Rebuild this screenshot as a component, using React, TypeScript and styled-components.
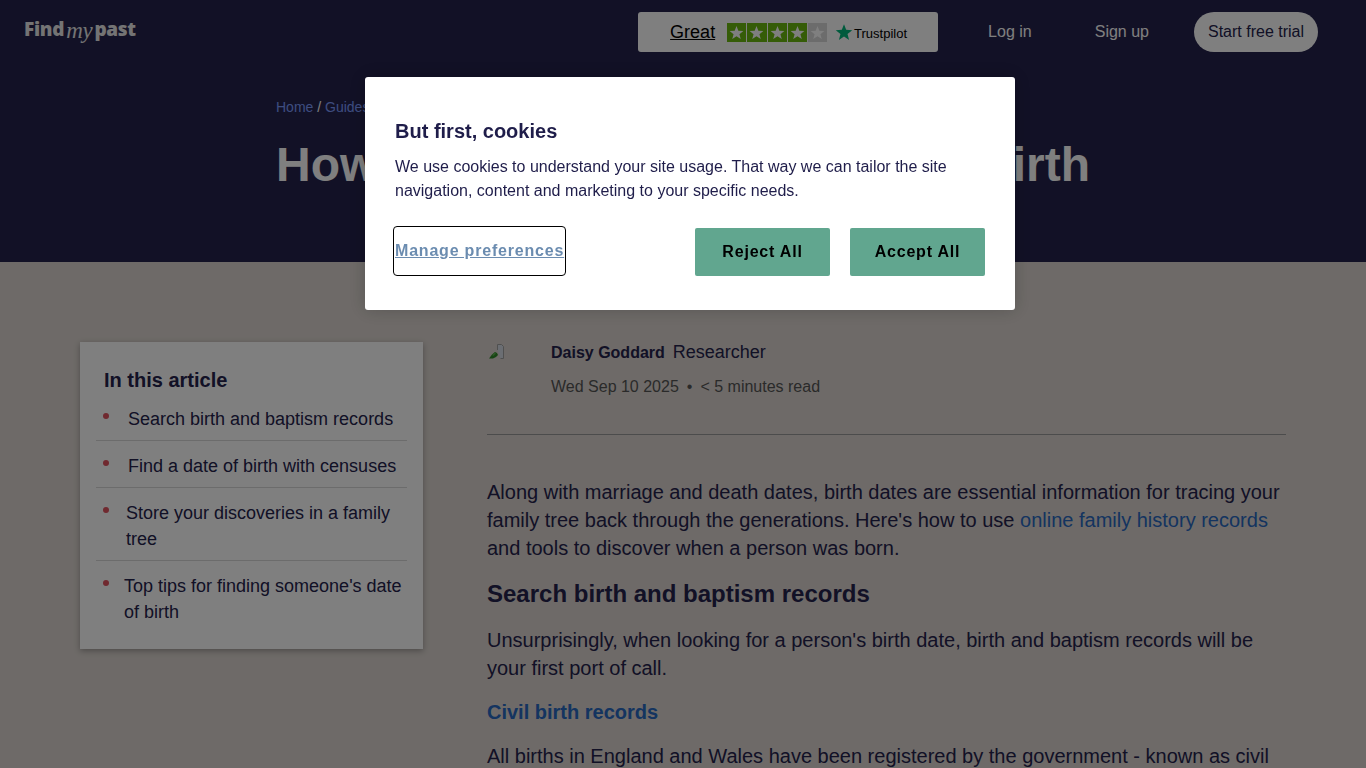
import React from "react";
import styled, { createGlobalStyle } from "styled-components";

const GlobalStyle = createGlobalStyle`
    html, body {
        margin: 0;
        padding: 0;
        height: 100%;
        overflow: hidden;
        background: #dcd5d0;
    }
    body {
        font-family: "Liberation Sans", Arial, sans-serif;
        color: #24224c;
    }
    * {
        box-sizing: border-box;
    }
`;

const Page = styled.div`
    height: 768px;
    overflow: hidden;
`;

const Hero = styled.header`
    height: 262px;
    background: #24224c;
    padding: 12px 48px 0 24px;
`;

const TopBar = styled.div`
    display: flex;
    align-items: flex-start;
    height: 40px;
`;

const Logo = styled.a`
    display: flex;
    align-items: baseline;
    height: 26px;
    padding-top: 6px;
    font-family: "Open Sans", sans-serif;
    font-size: 19px;
    line-height: 22px;
    font-weight: 800;
    color: #e8e8e8;
    letter-spacing: -0.3px;
`;

const LogoScript = styled.span`
    font-family: "Liberation Serif", serif;
    font-style: italic;
    font-weight: 400;
    font-size: 23px;
    margin: 0 2px 0 2px;
    letter-spacing: -0.3px;
    transform: translateY(2px);
`;

const TrustBox = styled.div`
    display: flex;
    align-items: center;
    width: 300px;
    height: 40px;
    margin-left: auto;
    padding-left: 32px;
    background: #fff;
    border-radius: 3px;
    color: #000;
`;

const TrustWord = styled.span`
    font-size: 18px;
    text-decoration: underline;
    margin-right: 12px;
`;

const Stars = styled.div`
    display: flex;
    gap: 1px;
    margin-right: 8px;
`;

const StarCell = styled.span<{ $on: boolean }>`
    display: flex;
    align-items: center;
    justify-content: center;
    width: 19.2px;
    height: 19px;
    background: ${(p) => (p.$on ? "#6ab80f" : "#d8d8d8")};
`;

const TrustMark = styled.span`
    font-size: 13px;
    margin-left: 1px;
    padding-top: 3px;
`;

const NavLink = styled.a<{ $left: number }>`
    margin-left: ${(p) => p.$left}px;
    font-size: 16px;
    line-height: 40px;
    color: #fff;
`;

const TrialButton = styled.a`
    margin-left: 45px;
    height: 40px;
    padding: 0 14px;
    border-radius: 20px;
    background: #fff;
    color: #24224c;
    font-size: 16px;
    line-height: 40px;
`;

const HeroInner = styled.div`
    width: 814px;
    margin-left: 252px;
    padding-top: 45px;
`;

const Crumbs = styled.div`
    font-size: 14px;
    line-height: 20px;
    color: #fff;

    a {
        color: #7c9bff;
    }
`;

const Title = styled.h1`
    margin: 18px 0 0;
    font-size: 48px;
    line-height: 60px;
    font-weight: 700;
    color: #fff;
    white-space: nowrap;
`;

const Body = styled.div`
    display: grid;
    grid-template-columns: 343px 799px;
    column-gap: 64px;
    padding: 80px 80px 0;
    align-items: start;
`;

const Aside = styled.aside`
    background: #fff;
    padding: 24px 16px 24px 16px;
    box-shadow: 0 2px 6px rgba(0, 0, 0, 0.3);
`;

const AsideTitle = styled.div`
    font-size: 20px;
    line-height: 28px;
    font-weight: 700;
    padding-left: 8px;
`;

const TocList = styled.ul`
    list-style: none;
    margin: 0;
    padding: 0;
`;

const TocItem = styled.li<{ $indent: number }>`
    position: relative;
    padding: 12px 0 8px ${(p) => p.$indent}px;
    font-size: 18px;
    line-height: 26px;
    border-bottom: 1px solid #d8d8d8;

    &:last-child {
        border-bottom: 0;
        padding-bottom: 0;
    }

    &::before {
        content: "";
        position: absolute;
        left: 7px;
        top: 19px;
        width: 6px;
        height: 6px;
        border-radius: 50%;
        background: #e0525f;
    }
`;

const Main = styled.main`
    min-width: 0;
`;

const Byline = styled.div`
    display: grid;
    grid-template-columns: 64px 1fr;
    height: 93px;
    border-bottom: 1px solid #999;
`;

const Avatar = styled.div`
    padding: 2px 0 0 2px;
`;

const AuthorRow = styled.div`
    display: flex;
    align-items: baseline;
    gap: 8px;
    line-height: 20px;
`;

const AuthorName = styled.span`
    font-size: 16px;
    font-weight: 700;
`;

const AuthorRole = styled.span`
    font-size: 18px;
`;

const Meta = styled.div`
    margin-top: 14px;
    font-size: 16px;
    line-height: 20px;
    color: #555;
`;

const MetaDot = styled.span`
    margin: 0 8px;
`;

const Para = styled.p<{ $top: number }>`
    margin: ${(p) => p.$top}px 0 0;
    font-size: 20px;
    line-height: 28px;
`;

const InlineLink = styled.a`
    color: #2868c0;
`;

const SectionTitle = styled.h2`
    margin: 16px 0 0;
    font-size: 24px;
    line-height: 32px;
    font-weight: 700;
`;

const SubTitle = styled.h3`
    margin: 16px 0 0;
    font-size: 20px;
    line-height: 28px;
    font-weight: 700;
    color: #2868c0;
`;

const Overlay = styled.div`
    position: fixed;
    inset: 0;
    background: rgba(0, 0, 0, 0.5);
`;

const Modal = styled.div`
    position: fixed;
    left: 365px;
    top: 77px;
    width: 650px;
    height: 233px;
    padding: 42px 30px 0;
    background: #fff;
    border-radius: 3px;
    box-shadow: 0 0 18px rgba(0, 0, 0, 0.2);
`;

const ModalTitle = styled.div`
    font-size: 20px;
    line-height: 24px;
    font-weight: 700;
    color: #1f1d4a;
`;

const ModalText = styled.p`
    margin: 12px 0 0;
    font-size: 16px;
    line-height: 24px;
    color: #1f1d4a;
`;

const ModalActions = styled.div`
    display: flex;
    align-items: flex-start;
    margin-top: 25px;
`;

const ManageLink = styled.a`
    display: block;
    width: 173px;
    height: 50px;
    margin: -2px 0 0 -2px;
    border: 1px solid #000;
    border-radius: 4px;
    padding-left: 1px;
    font-size: 16px;
    font-weight: 700;
    line-height: 47px;
    letter-spacing: 0.8px;
    color: #6b8cb0;
    text-decoration: underline;
    white-space: nowrap;
`;

const ActionButton = styled.button<{ $first?: boolean }>`
    width: 135px;
    height: 48px;
    margin-left: ${(p) => (p.$first ? "auto" : "20px")};
    border: 0;
    border-radius: 2px;
    background: #61a68f;
    color: #000;
    font-family: inherit;
    font-size: 16px;
    font-weight: 700;
    letter-spacing: 0.8px;
`;

const StarIcon = ({ size, color }: { size: number; color: string }) => (
    <svg width={size} height={size} viewBox="0 0 24 24" aria-hidden="true">
        <path
            fill={color}
            d="M12 1.5l2.9 7.6 8.1.4-6.3 5.1 2.1 7.9-6.8-4.4-6.8 4.4 2.1-7.9L1 9.500l8.100-.4z"
        />
    </svg>
);

const BrokenImage = () => (
    <svg width="16" height="16" viewBox="0 0 16 16" aria-hidden="true">
        <path fill="#d6dce6" stroke="#a0a0a0" strokeWidth="1" d="M8.500 6V.5h4l2 2v12h-3" />
        <path fill="#2f8a2a" d="M0 14.500l3-4 3-2.500 2 1 1 2-2 2-3 1.500z" />
        <path fill="#58b048" d="M3 11l2.500-2.500 1.500 1-2.500 2.500z" />
    </svg>
);

const toc = [
    { label: "Search birth and baptism records", indent: 32 },
    { label: "Find a date of birth with censuses", indent: 32 },
    { label: "Store your discoveries in a family tree", indent: 30 },
    { label: "Top tips for finding someone's date of birth", indent: 28 },
];

const App = () => (
    <Page>
        <GlobalStyle />
        <Hero>
            <TopBar>
                <Logo>
                    Find<LogoScript>my</LogoScript>past
                </Logo>
                <TrustBox>
                    <TrustWord>Great</TrustWord>
                    <Stars>
                        {[0, 1, 2, 3, 4].map((i) => (
                            <StarCell key={i} $on={i < 4}>
                                <StarIcon size={15} color="#fff" />
                            </StarCell>
                        ))}
                    </Stars>
                    <StarIcon size={18} color="#00b67a" />
                    <TrustMark>Trustpilot</TrustMark>
                </TrustBox>
                <NavLink $left={50}>Log in</NavLink>
                <NavLink $left={63}>Sign up</NavLink>
                <TrialButton>Start free trial</TrialButton>
            </TopBar>
            <HeroInner>
                <Crumbs>
                    <a>Home</a> / <a>Guides</a> / <a>Family records</a>
                </Crumbs>
                <Title>How to find someone's date of birth</Title>
            </HeroInner>
        </Hero>
        <Body>
            <Aside>
                <AsideTitle>In this article</AsideTitle>
                <TocList>
                    {toc.map((item) => (
                        <TocItem key={item.label} $indent={item.indent}>
                            {item.label}
                        </TocItem>
                    ))}
                </TocList>
            </Aside>
            <Main>
                <Byline>
                    <Avatar>
                        <BrokenImage />
                    </Avatar>
                    <div>
                        <AuthorRow>
                            <AuthorName>Daisy Goddard</AuthorName>
                            <AuthorRole>Researcher</AuthorRole>
                        </AuthorRow>
                        <Meta>
                            Wed Sep 10 2025<MetaDot>•</MetaDot>&lt; 5 minutes read
                        </Meta>
                    </div>
                </Byline>
                <Para $top={43}>
                    Along with marriage and death dates, birth dates are essential information for
                    tracing your family tree back through the generations. Here's how to use{" "}
                    <InlineLink>online family history records</InlineLink> and tools to discover
                    when a person was born.
                </Para>
                <SectionTitle>Search birth and baptism records</SectionTitle>
                <Para $top={16}>
                    Unsurprisingly, when looking for a person's birth date, birth and baptism
                    records will be your first port of call.
                </Para>
                <SubTitle>Civil birth records</SubTitle>
                <Para $top={16}>
                    All births in England and Wales have been registered by the government - known
                    as civil registration - since 1837.
                </Para>
            </Main>
        </Body>
        <Overlay />
        <Modal>
            <ModalTitle>But first, cookies</ModalTitle>
            <ModalText>
                We use cookies to understand your site usage. That way we can tailor the site
                navigation, content and marketing to your specific needs.
            </ModalText>
            <ModalActions>
                <ManageLink>Manage preferences</ManageLink>
                <ActionButton $first>Reject All</ActionButton>
                <ActionButton>Accept All</ActionButton>
            </ModalActions>
        </Modal>
    </Page>
);

export default App;
